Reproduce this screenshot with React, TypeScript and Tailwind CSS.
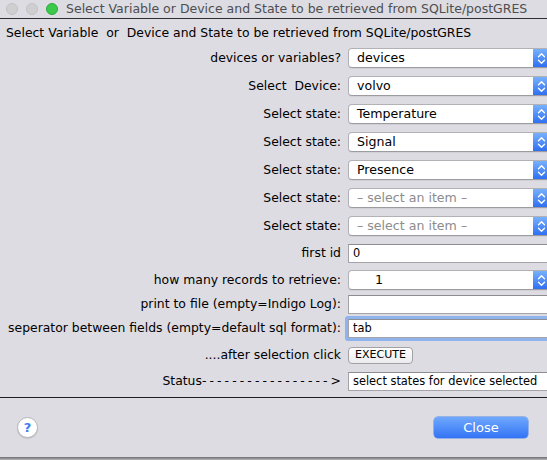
import React from "react";

const statusText = "select states for device selected";

function Chevrons() {
	return (
		<svg
			width="9"
			height="13"
			viewBox="0 0 9 13"
			fill="none"
			stroke="white"
			strokeWidth="1.4"
			strokeLinecap="round"
			strokeLinejoin="round"
		>
			<path d="M1.5 4.8 L4.5 1.8 L7.5 4.8" />
			<path d="M1.5 8.2 L4.5 11.2 L7.5 8.2" />
		</svg>
	);
}

const SelectBox = ({
	value,
	placeholder,
	indent,
}: {
	value?: string;
	placeholder?: boolean;
	indent?: boolean;
}) => (
	<div className="flex h-[20px] w-[202px] shrink-0 overflow-hidden rounded-[4px] border border-[#b2b2b6] border-b-[#9c9ca0] bg-white text-[12.6px] shadow-[0_1px_1px_rgba(0,0,0,0.06)]">
		<div
			className={`flex flex-1 items-center ${indent ? "pl-[26px]" : "pl-[8px]"} ${placeholder ? "text-[#8c8c8c]" : "text-black"}`}
		>
			{placeholder ? "– select an item –" : value}
		</div>
		<div className="flex w-[16px] items-center justify-center bg-gradient-to-b from-[#78b0fc] to-[#2f6ff2]">
			<Chevrons />
		</div>
	</div>
);

const TextBox = ({
	value,
	focused,
}: {
	value?: string;
	focused?: boolean;
}) => (
	<div
		className={`flex h-[19px] w-[210px] shrink-0 items-center border border-[#a4a4a8] border-t-[#8e8e92] bg-white pl-[4px] text-[11.4px] ${focused ? "shadow-[0_0_0_3px_#8fb3ec] rounded-[1px]" : ""}`}
	>
		{value}
	</div>
);

const Row = ({
	label,
	height,
	children,
}: {
	label: React.ReactNode;
	height: string;
	children: React.ReactNode;
}) => (
	<div className={`flex items-center ${height}`}>
		<div className="w-[341px] shrink-0 whitespace-pre text-right">{label}</div>
		<div className="ml-[7px]">{children}</div>
	</div>
);

const stateRows = [
	{ label: "Select state:", value: "Temperature" },
	{ label: "Select state:", value: "Signal" },
	{ label: "Select state:", value: "Presence" },
	{ label: "Select state:", placeholder: true },
	{ label: "Select state:", placeholder: true },
];

export default function App() {
	return (
		<div className="relative flex h-[460px] w-[547px] flex-col overflow-hidden bg-[#dddce3] font-['DejaVu_Sans',sans-serif] text-[12.4px] text-black">
			{/* title bar */}
			<div className="flex h-[19px] shrink-0 items-center border-b border-[#2e2e30] bg-[#dddce3]">
				<div className="ml-[6px] flex gap-[8px]">
					<span className="h-[12px] w-[12px] rounded-full border border-[#c2c2c4] bg-[#cfcfd1]" />
					<span className="h-[12px] w-[12px] rounded-full border border-[#c2c2c4] bg-[#cfcfd1]" />
					<span className="h-[12px] w-[12px] rounded-full border border-[#2eaa3a] bg-[#3cc94a]" />
				</div>
				<div className="ml-[8px] whitespace-pre text-[12.5px] text-[#4e4e50]">
					Select Variable or Device and State to be retrieved from SQLite/postGRES
				</div>
			</div>

			{/* form */}
			<div className="flex h-[25px] shrink-0 items-center whitespace-pre pl-[6px] pt-[3px]">
				Select Variable  or  Device and State to be retrieved from SQLite/postGRES
			</div>
			<Row label="devices or variables?" height="h-[28px]">
				<SelectBox value="devices" />
			</Row>
			<Row label="Select  Device:" height="h-[28px]">
				<SelectBox value="volvo" />
			</Row>
			{stateRows.map((row, index) => (
				<Row key={index} label={row.label} height="h-[28px]">
					<SelectBox value={row.value} placeholder={row.placeholder} />
				</Row>
			))}
			<Row label="first id" height="h-[27px]">
				<TextBox value="0" />
			</Row>
			<Row label="how many records to retrieve:" height="h-[26px]">
				<SelectBox value="1" indent />
			</Row>
			<Row label="print to file (empty=Indigo Log):" height="h-[22px]">
				<TextBox />
			</Row>
			<Row label="seperator between fields (empty=default sql format):" height="h-[27px]">
				<TextBox value="tab" focused />
			</Row>
			<Row label="....after selection click" height="h-[27px]">
				<button className="flex h-[17px] w-[65px] items-center justify-center rounded-[4px] border border-[#a2a2a6] bg-gradient-to-b from-white to-[#ebebee] text-[11px]">
					EXECUTE
				</button>
			</Row>
			<Row
				label={
					<>
						Status<span className="tracking-[3.1px]">-----------------</span>&gt;
					</>
				}
				height="h-[25px]"
			>
				<TextBox value={statusText} />
			</Row>
			<div className="h-[3px] shrink-0" />

			{/* footer */}
			<div className="flex h-[60px] shrink-0 items-center justify-between border-t border-[#1e1e20] pl-[17px] pr-[19px]">
				<div className="flex h-[21px] w-[21px] items-center justify-center rounded-full border border-[#b6b6ba] bg-white text-[13px] font-bold text-[#3c7ef4] shadow-[0_1px_1px_rgba(0,0,0,0.12)]">
					?
				</div>
				<button className="h-[21px] w-[94px] rounded-[4px] bg-gradient-to-b from-[#6fa8fc] to-[#3473f5] text-[13px] text-white shadow-[0_0_0_0.5px_#4f86ea]">
					Close
				</button>
			</div>
			<div className="flex-1 bg-gradient-to-b from-[#6e6e70] to-[#b9b9bb]" />
		</div>
	);
}
